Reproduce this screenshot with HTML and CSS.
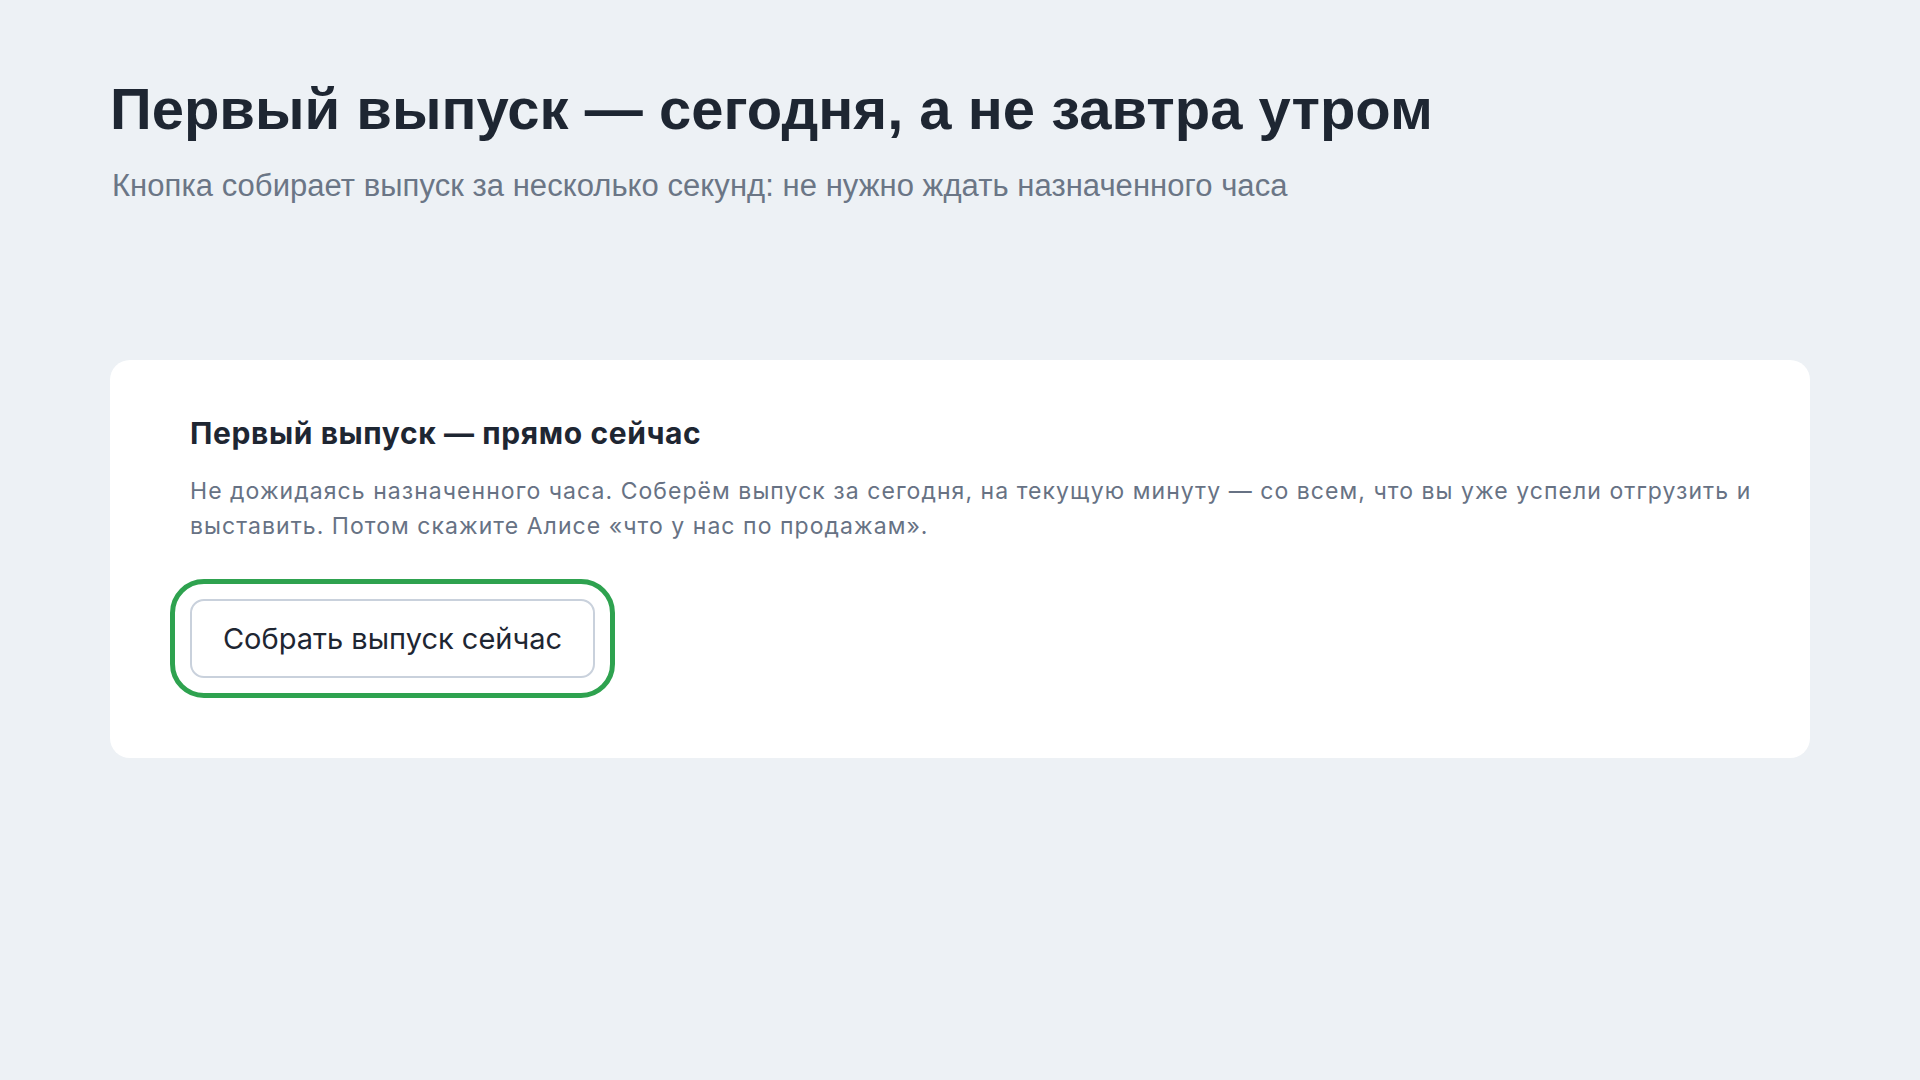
FILE: index.html
```html
<!DOCTYPE html>
<html lang="ru">
<head>
<meta charset="utf-8">
<title>Первый выпуск</title>
<link rel="stylesheet" href="styles.css">
</head>
<body>
<main class="page">
  <header class="page-head">
    <h1 class="title">Первый выпуск — сегодня, а не завтра утром</h1>
    <p class="subtitle">Кнопка собирает выпуск за несколько секунд: не нужно ждать назначенного часа</p>
  </header>
  <section class="card">
    <h2 class="card-title">Первый выпуск — прямо сейчас</h2>
    <p class="card-text">Не дожидаясь назначенного часа. Соберём выпуск за сегодня, на текущую минуту — со всем, что вы уже успели отгрузить и выставить. Потом скажите Алисе «что у нас по продажам».</p>
    <div class="actions">
      <button class="btn btn-highlight" type="button">Собрать выпуск сейчас</button>
    </div>
  </section>
</main>
</body>
</html>
```
FILE: styles.css
```css
html, body {
  margin: 0;
  padding: 0;
  background: #edf1f5;
}
body {
  font-family: "Liberation Sans", Arial, sans-serif;
  color: #1e2632;
}
.page {
  padding: 74px 110px 0 110px;
}
.page-head {
  display: flex;
  flex-direction: column;
  gap: 23px;
}
.title {
  margin: 0;
  font-size: 58px;
  line-height: 70px;
  font-weight: 700;
  color: #1e2632;
}
.subtitle {
  margin: 0 0 0 2px;
  font-size: 31px;
  line-height: 37px;
  letter-spacing: 0.05px;
  color: #6b7686;
}
.card {
  margin-top: 156px;
  background: #ffffff;
  border-radius: 20px;
  padding: 55px 40px 80px 80px;
  font-family: Inter, "Noto Sans", sans-serif;
}
.card-title {
  margin: 0;
  font-size: 30px;
  line-height: 36px;
  font-weight: 700;
  letter-spacing: 0.6px;
  color: #1e2632;
}
.card-text {
  margin: 23px 0 0 0;
  font-size: 23px;
  line-height: 35px;
  letter-spacing: 1.05px;
  color: #677284;
}
.actions {
  margin-top: 55px;
  display: flex;
}
.btn {
  font-family: Inter, "Noto Sans", sans-serif;
  font-size: 29px;
  color: #1e2632;
  background: #ffffff;
  border: 2px solid #c9d1dc;
  border-radius: 14px;
  width: 405px;
  height: 79px;
  padding: 0;
  cursor: pointer;
}
.btn-highlight {
  outline: 5px solid #2ea24f;
  outline-offset: 15px;
}
```
